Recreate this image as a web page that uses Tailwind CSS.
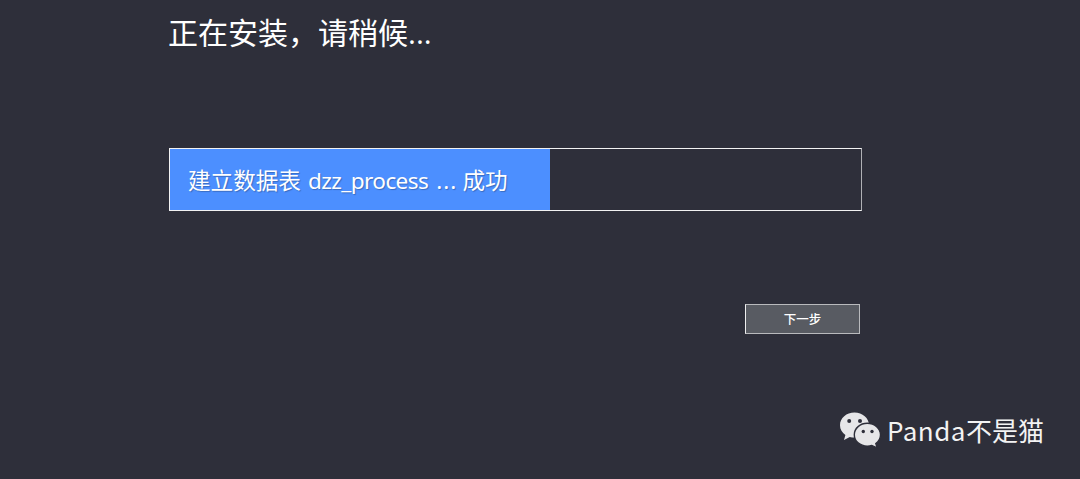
<!DOCTYPE html>
<html lang="zh-CN">
<head>
    <meta charset="UTF-8">
    <meta name="viewport" content="width=device-width, initial-scale=1.0">
    <title>正在安装</title>
    <script src="https://cdn.jsdelivr.net/npm/@tailwindcss/browser@4"></script>
</head>
<body class="relative h-[479px] overflow-hidden bg-[#2e2f3a] font-['Noto_Sans','Noto_Sans_CJK_SC',sans-serif] text-white">
    <main class="ml-[169px] w-[693px] pt-[9px]">
        <h1 class="-ml-px h-11 whitespace-nowrap font-['Noto_Sans_CJK_SC',sans-serif] text-[30px] leading-[44px]">正在安装，请稍候<span class="font-['Open_Sans',sans-serif]">...</span></h1>

        <!-- 安装进度 -->
        <div class="mt-[95px] h-[63px] border border-r-[#b0b1b5] border-[#f2f2f2]">
            <div class="flex h-full items-center bg-[#4c8fff] pt-0.5 pl-[18px] text-[22.6px] whitespace-nowrap [text-shadow:1px_1px_1px_rgba(0,0,0,0.25)]" style="width: 55%">
                <span>建立数据表</span>
                <span class="ml-[7px] tracking-[-0.6px]">dzz_process</span>
                <span class="ml-[8px] tracking-[1px]">...</span>
                <span class="ml-[5px]">成功</span>
            </div>
        </div>

        <div class="mt-[93px] flex justify-end pr-0.5">
            <button class="h-[30px] w-[115px] border border-[#b9babd] border-l-[#eeeeee] bg-[#585b62] font-['Noto_Sans_CJK_SC',sans-serif] text-[12.5px] font-medium">下一步</button>
        </div>
    </main>

    <!-- 水印 -->
    <div class="absolute top-[410px] left-[839px] flex items-center text-[#f3f3f3]">
        <svg class="h-10 w-[43px]" viewBox="0 0 43 40" fill="#e6e6e8">
            <path d="M15.5 2.5C7.5 2.5 1 8 1 15.2c0 4 2.1 7.4 5.4 9.7L5 30l5.800-3c1.500.4 3.100.6 4.700.6 8 0 14.500-5.600 14.500-12.500S23.500 2.500 15.500 2.500z"/>
            <path stroke="#2e2f3a" stroke-width="1.400" d="M28.300 13.300c-7.200 0-13 5-13 11.400s5.800 11.400 13 11.400c1.600 0 3.100-.2 4.500-.7l5.300 2.400-1.300-4.300c2.900-2.100 4.700-5.200 4.700-8.800 0-6.400-5.900-11.400-13.200-11.400z"/>
            <g fill="#2e2f3a">
                <circle cx="10.200" cy="11" r="2"/>
                <circle cx="21" cy="11" r="2"/>
                <circle cx="24.300" cy="21.500" r="1.700"/>
                <circle cx="33" cy="21.500" r="1.700"/>
            </g>
        </svg>
        <span class="ml-[5px] font-['Noto_Sans_CJK_SC',sans-serif] text-[26px] leading-10 whitespace-nowrap"><span class="tracking-[0.5px]">Panda</span>不是猫</span>
    </div>
</body>
</html>
